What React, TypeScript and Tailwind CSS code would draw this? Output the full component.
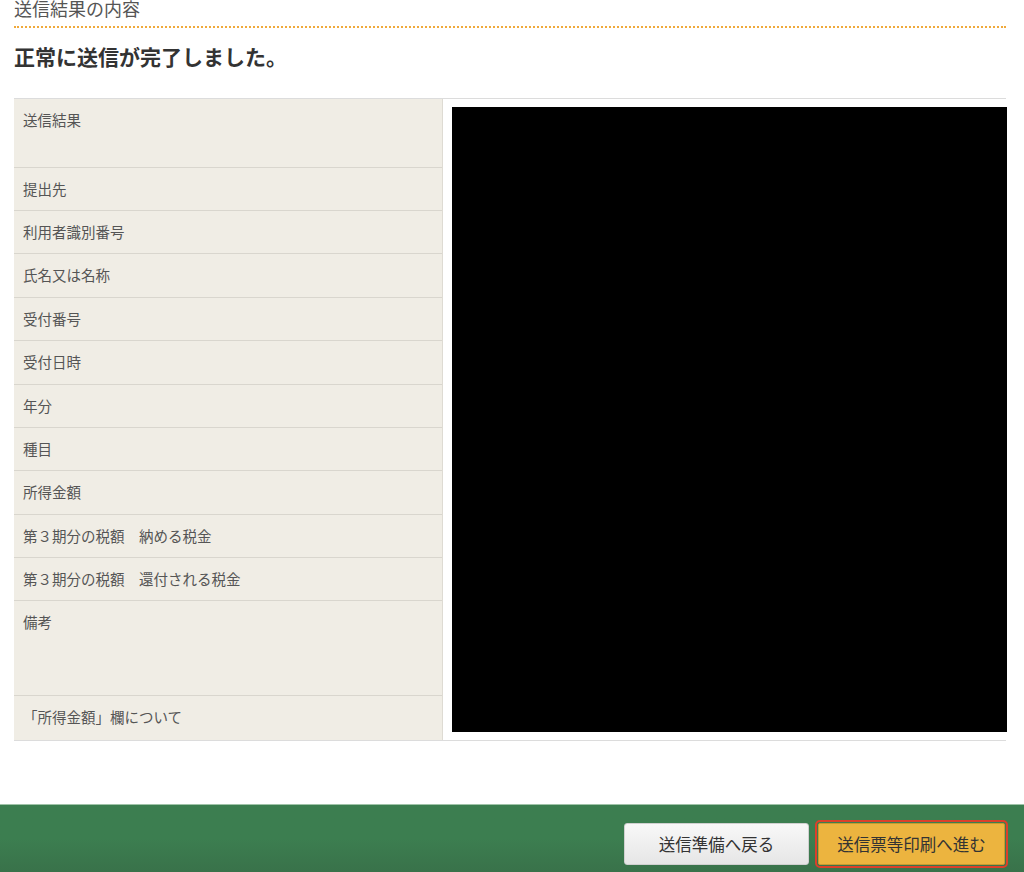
const rows: { label: string; h: string }[] = [
  { label: "送信結果", h: "h-[69px]" },
  { label: "提出先", h: "h-[43px]" },
  { label: "利用者識別番号", h: "h-[43px]" },
  { label: "氏名又は名称", h: "h-[44px]" },
  { label: "受付番号", h: "h-[43px]" },
  { label: "受付日時", h: "h-[44px]" },
  { label: "年分", h: "h-[43px]" },
  { label: "種目", h: "h-[43px]" },
  { label: "所得金額", h: "h-[44px]" },
  { label: "第３期分の税額　納める税金", h: "h-[43px]" },
  { label: "第３期分の税額　還付される税金", h: "h-[43px]" },
  { label: "備考", h: "h-[95px]" },
  { label: "「所得金額」欄について", h: "h-[44px]" },
];

function App() {
  return (
    <div className="min-h-[872px] bg-white font-['Noto_Sans_CJK_JP','Noto_Sans',sans-serif] text-[#333]">
      <div className="pr-[18px] pl-[14px]">
        <h2 className="border-b-2 border-dotted border-[#f0a93a] pb-[10px] text-[18px] leading-[16px] text-[#555]">
          送信結果の内容
        </h2>
        <h1 className="mt-[14px] mb-[27px] text-[21px] leading-[29px] font-bold text-[#333]">
          正常に送信が完了しました。
        </h1>
        <div className="flex border-t border-b border-[#dcdcdc]">
          <div className="w-[429px] shrink-0 border-r border-[#dedbd3] bg-[#f0ede5]">
            {rows.map((row, i) => (
              <div
                key={i}
                className={`${row.h} ${i < rows.length - 1 ? "border-b border-[#d9d6ce]" : ""} pt-[11px] pl-[9px] text-[14.5px] leading-[20px] text-[#555]`}
              >
                {row.label}
              </div>
            ))}
          </div>
          <div className="-mr-[1px] flex-1 pt-[8px] pb-[8px] pl-[9px]">
            <div className="h-full w-full bg-black"></div>
          </div>
        </div>
      </div>
      <div className="mt-[63px] h-[68px] border-t border-[#9fc3a8] bg-gradient-to-b from-[#3c7e50] via-[#3c7e50] to-[#39724a]">
        <div className="flex justify-end gap-[9px] pt-[18px] pr-[19px]">
          <button className="h-[42px] w-[185px] rounded-[3px] border border-[#d0d0d0] bg-gradient-to-b from-[#f8f8f8] to-[#e6e6e6] text-[16.5px] text-[#333]">
            送信準備へ戻る
          </button>
          <button className="h-[42px] w-[187px] rounded-[2px] border border-[#c9982f] bg-[#ecb43f] text-[16.5px] text-[#333] outline-2 outline-offset-[1px] outline-[#dc3f2a]">
            送信票等印刷へ進む
          </button>
        </div>
      </div>
    </div>
  );
}

export default App;
